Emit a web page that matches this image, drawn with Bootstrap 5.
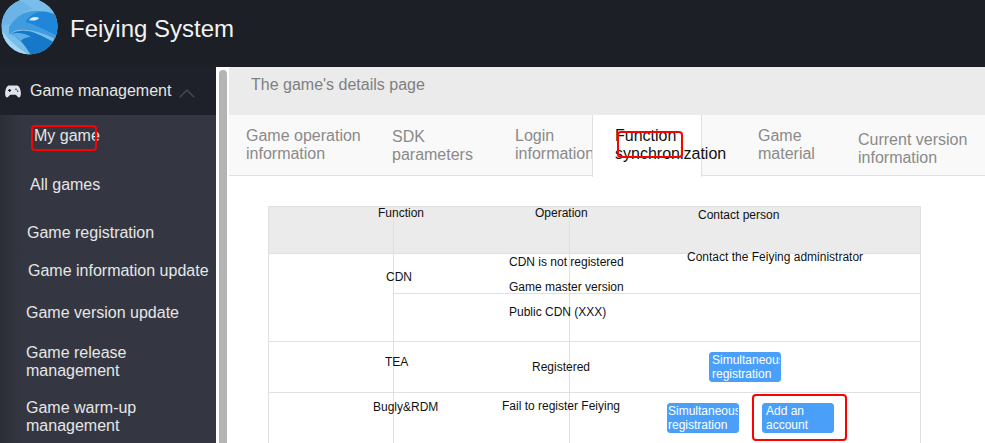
<!DOCTYPE html>
<html lang="en">
<head>
  <meta charset="UTF-8">
  <title>Feiying System</title>
  <link href="https://cdn.jsdelivr.net/npm/bootstrap@5.3.0/dist/css/bootstrap.min.css" rel="stylesheet">
  <style>
    html, body { height: 443px; overflow: hidden; }
    body { font-family: "Liberation Sans", Arial, sans-serif; background: #fff; }
    .app-top { height: 67px; background: #1c1f26; color: #f2f2f2; }
    .app-top h1 { font-size: 24px; font-weight: 400; margin: 0 0 9px 12px; }
    .logo-svg { margin-left: 1px; align-self: flex-start; margin-top: -2px; }
    .app-body { height: 376px; }

    /* sidebar */
    .side-wrap { width: 216px; flex: none; color: #e6e6e6; font-size: 16px; line-height: 18px; }
    .side-head { height: 48px; background: #1e2129; padding: 0 0 0 5px; }
    .side-head span { margin-left: 9px; }
    .side-head .chev { margin-left: 8px; margin-top: 5px; }
    .side-list { height: 328px; background: linear-gradient(90deg, #2b2e36 0, #343741 22px); }
    .side-link { display: block; color: #e6e6e6; text-decoration: none; width: 190px; white-space: nowrap; }
    .side-a { margin: 12px 0 0 34px; }
    .side-b { margin: 31px 0 0 30px; }
    .side-c { margin: 30px 0 0 27px; }
    .side-d { margin: 20px 0 0 28px; width: 186px; }
    .side-e { margin: 24px 0 0 26px; }
    .side-f { margin: 22px 0 0 26px; width: 130px; white-space: normal; }
    .side-g { margin: 19px 0 0 26px; width: 130px; white-space: normal; }
    .scroll-rail { width: 13px; flex: none; background: #fff; padding: 3px 2px 0 3px; }
    .scroll-thumb { height: 100%; background: #b4b4b4; border-radius: 4px 4px 0 0; }

    /* content */
    .page-head { height: 48px; background: #ebebeb; color: #7f7f7f; font-size: 16px; padding: 9px 0 0 22px; line-height: 18px; }
    .tab-row { height: 61px; background: #f9f9f9; border-bottom: 1px solid #e0e0e0; font-size: 16px; line-height: 18px; color: #8a8a8a; }
    .tab-i { white-space: nowrap; }
    .tab-1 { margin: 12px 0 0 17px; width: 146px; }
    .tab-2 { margin: 13px 0 0 0; width: 123px; }
    .tab-3 { margin: 12px 0 0 0; width: 77px; }
    .tab-act { width: 110px; height: 62px; background: #fff; border: solid #e0e0e0; border-width: 0 1px; color: #111; padding: 12px 0 0 22px; }
    .tab-5 { margin: 12px 0 0 56px; width: 100px; }
    .tab-6 { margin: 16px 0 0 0; }

    .table-zone { padding: 30px 0 0 39px; }
    .func-table { width: 652px; table-layout: fixed; font-size: 12px; line-height: 14px; --bs-table-color: #111; --bs-table-border-color: #e0e0e0; margin: 0; }
    .table.func-table > :not(caption) > * > * { padding: 0; vertical-align: top; white-space: nowrap; overflow: visible; font-weight: 400; }
    .table.func-table > thead > .head-row > * { --bs-table-bg: #ebebeb; height: 47px; }
    .func-table .row-a { height: 39px; }
    .func-table .row-b { height: 48px; }
    .func-table .row-c { height: 51px; }
    .func-table .row-d { height: 60px; }
    .cell-txt { display: block; }
    .t-func { margin: -1px 0 0 109px; }
    .t-oper { margin: -1px 0 0 141px; }
    .t-cont { margin: 1px 0 0 128px; }
    .t-cdn { margin: 16px 0 0 117px; }
    .t-ns { margin: 1px 0 0 115px; }
    .t-gm { margin: 11px 0 -1px 115px; }
    .t-pub { margin: 11px 0 0 115px; }
    .t-admin { margin: -1px 0 0 117px; height: 8px; line-height: 8px; background: #fff; }
    .t-tea { margin: 13px 0 0 116px; }
    .t-reg { margin: 18px 0 0 138px; }
    .t-bug { margin: 7px 0 0 104px; }
    .t-fail { margin: 6px 0 0 108px; }
    .blue-btn { --bs-btn-bg: #4a9ff9; --bs-btn-border-color: #4a9ff9; --bs-btn-hover-bg: #4a9ff9; --bs-btn-hover-border-color: #4a9ff9; width: 72px; height: 30px; padding: 0 0 0 2px; border-radius: 3px; font-size: 12px; line-height: 14px; text-align: left; overflow: hidden; white-space: nowrap; flex: none; }
    .btn-one { margin: 10px 0 0 139px; }
    .btn-pair { margin: 10px 0 0 97px; gap: 23px; }
    .btn-tight { padding-left: 0; }
    .btn-add { padding-left: 3px; }

    /* red annotation frames */
    .red-frame { position: absolute; border: 2px solid #f00; border-radius: 4px; pointer-events: none; }
    .rf-a { left: 31px; top: 125px; width: 66px; height: 26px; }
    .rf-b { left: 617px; top: 131px; width: 66px; height: 27px; }
    .rf-c { left: 752px; top: 394px; width: 95px; height: 47px; }
  </style>
</head>
<body>
  <div class="position-relative">
    <header class="app-top d-flex align-items-center">
      <svg class="logo-svg" width="57" height="57" viewBox="0 0 57 57">
        <defs><clipPath id="logoClip"><circle cx="28.5" cy="28.5" r="28"/></clipPath></defs>
        <g clip-path="url(#logoClip)">
          <rect width="57" height="57" fill="#79bdea"/>
          <path d="M0 32 C8 42 16 50 28 57 L0 57Z" fill="#a5d6f3"/>
          <path d="M10 0 C20 2 28 7 32 11 C24 12 16 18 10 26 L0 28 L0 0Z" fill="#6cb4e6"/>
          <path d="M8 29 C14 19 24 12 36 13 C45 13 52 15 57 18 L57 42 C48 38 38 33 26 32 C18 31 12 32 8 37Z" fill="#3f9ce0"/>
          <path d="M24 24 C29 16 38 13 46 14 C51 15 55 17 57 19 L57 38 C46 33 36 27 24 24Z" fill="#1f86d8"/>
          <path d="M10 36 C16 32 26 32 34 35 C42 38 50 43 57 46 L57 57 L30 57 C26 52 24 46 16 40 C14 38 12 37 10 36Z" fill="#1579c8"/>
          <path d="M10 36 C16 34 24 35 30 39 C26 39 22 40 20 43 C17 40 13 38 10 36Z" fill="#5cb0e8"/>
          <path d="M28 22 C30 19 35 18 38 20 C36 23 31 23 28 22Z" fill="#d8f0fd"/>
        </g>
      </svg>
      <h1>Feiying System</h1>
    </header>

    <div class="app-body d-flex">
      <aside class="side-wrap d-flex flex-column">
        <div class="side-head d-flex align-items-center">
          <svg width="16" height="13" viewBox="0 0 16 13"><path d="M4.5 0.5h7C14 0.5 15.2 3 15.8 7c.4 3-.4 5.5-1.8 5.5-1.5 0-2.5-2.7-3.6-2.7H5.600C4.500 9.800 3.500 12.500 2 12.500.6 12.500-.2 10 .2 7 .8 3 2 .5 4.500 .5Z" fill="#dfe3ea"/><path d="M3.100 4.800h3v1.200h-3zM4 3.900h1.200v3H4z" fill="#1e2129"/><circle cx="11" cy="4.300" r=".8" fill="#1e2129"/><circle cx="12.600" cy="6" r=".8" fill="#1e2129"/></svg>
          <span>Game management</span>
          <svg class="chev" width="16" height="9" viewBox="0 0 16 9"><path d="M.8 8.200 8 1l7.200 7.200" fill="none" stroke="#464a59" stroke-width="1.300"/></svg>
        </div>
        <nav class="side-list">
          <a class="side-link side-a" href="#">My game</a>
          <a class="side-link side-b" href="#">All games</a>
          <a class="side-link side-c" href="#">Game registration</a>
          <a class="side-link side-d" href="#">Game information update</a>
          <a class="side-link side-e" href="#">Game version update</a>
          <a class="side-link side-f" href="#">Game release management</a>
          <a class="side-link side-g" href="#">Game warm-up management</a>
        </nav>
      </aside>
      <div class="scroll-rail"><div class="scroll-thumb"></div></div>

      <main class="flex-grow-1">
        <div class="page-head">The game's details page</div>
        <div class="tab-row d-flex">
          <div class="tab-i tab-1">Game operation<br>information</div>
          <div class="tab-i tab-2">SDK<br>parameters</div>
          <div class="tab-i tab-3">Login<br>information</div>
          <div class="tab-i tab-act">Function<br>synchronization</div>
          <div class="tab-i tab-5">Game<br>material</div>
          <div class="tab-i tab-6">Current version<br>information</div>
        </div>
        <div class="table-zone">
          <table class="table table-bordered func-table">
            <colgroup><col style="width:125px"><col style="width:176px"><col style="width:351px"></colgroup>
            <thead>
              <tr class="head-row">
                <th><span class="cell-txt t-func">Function</span></th>
                <th><span class="cell-txt t-oper">Operation</span></th>
                <th><span class="cell-txt t-cont">Contact person</span></th>
              </tr>
            </thead>
            <tbody>
              <tr class="row-a">
                <td rowspan="2"><span class="cell-txt t-cdn">CDN</span></td>
                <td><span class="cell-txt t-ns">CDN is not registered</span><span class="cell-txt t-gm">Game master version</span></td>
                <td><span class="cell-txt t-admin">Contact the Feiying administrator</span></td>
              </tr>
              <tr class="row-b">
                <td><span class="cell-txt t-pub">Public CDN (XXX)</span></td>
                <td></td>
              </tr>
              <tr class="row-c">
                <td><span class="cell-txt t-tea">TEA</span></td>
                <td><span class="cell-txt t-reg">Registered</span></td>
                <td><button type="button" class="btn btn-primary blue-btn btn-one d-block">Simultaneous<br>registration</button></td>
              </tr>
              <tr class="row-d">
                <td><span class="cell-txt t-bug">Bugly&amp;RDM</span></td>
                <td><span class="cell-txt t-fail">Fail to register Feiying</span></td>
                <td>
                  <div class="d-flex btn-pair">
                    <button type="button" class="btn btn-primary blue-btn btn-tight">Simultaneous<br>registration</button>
                    <button type="button" class="btn btn-primary blue-btn btn-add">Add an<br>account</button>
                  </div>
                </td>
              </tr>
            </tbody>
          </table>
        </div>
      </main>
    </div>

    <div class="red-frame rf-a"></div>
    <div class="red-frame rf-b"></div>
    <div class="red-frame rf-c"></div>
  </div>
  <script src="https://cdn.jsdelivr.net/npm/bootstrap@5.3.0/dist/js/bootstrap.bundle.min.js"></script>
</body>
</html>
